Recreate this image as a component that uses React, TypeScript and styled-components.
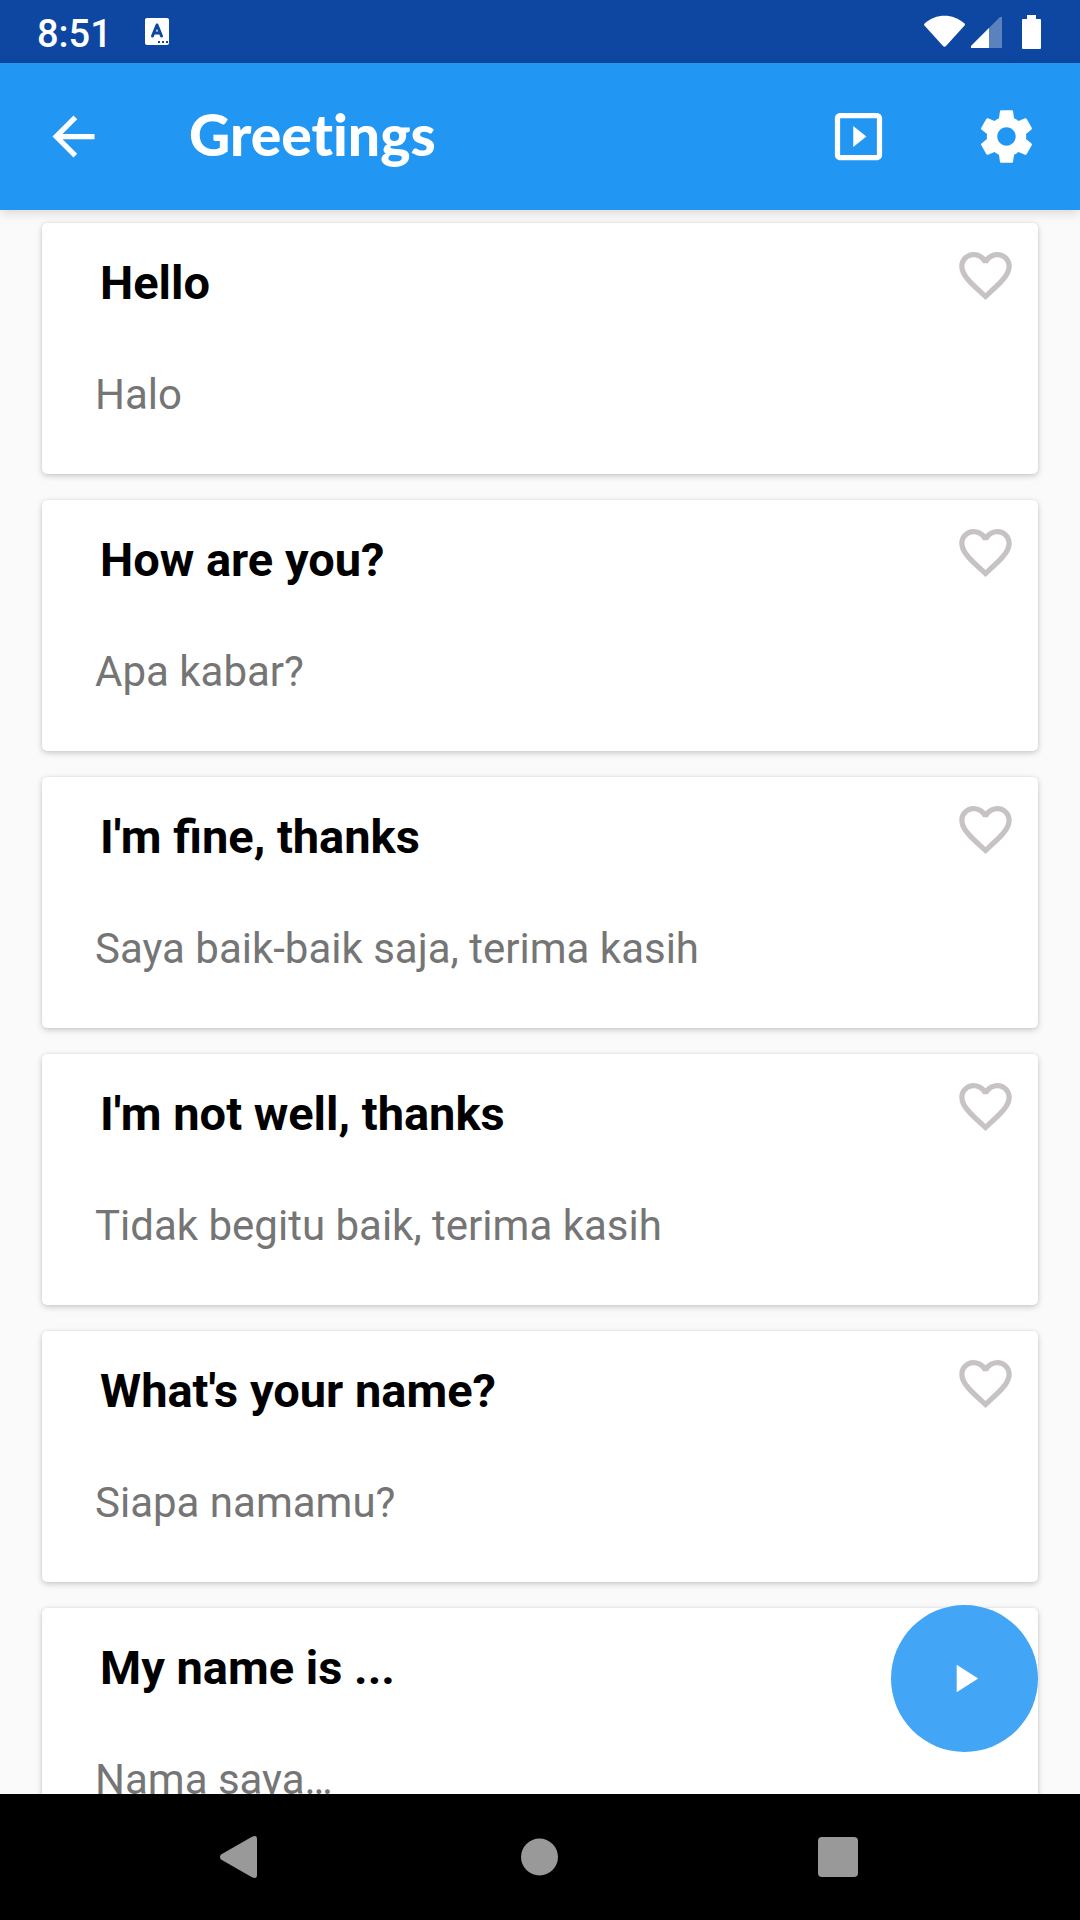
import React, { useState } from "react";
import styled, { createGlobalStyle } from "styled-components";

const GlobalStyle = createGlobalStyle`
  *, *::before, *::after { box-sizing: border-box; }
  body { margin: 0; background: #fafafa; font-family: Roboto, "Noto Sans", sans-serif; }
  h1, h2, p, ul { margin: 0; padding: 0; }
`;

const Screen = styled.div`
  position: relative;
  display: flex;
  flex-direction: column;
  height: 100vh;
  overflow: hidden;
  background: #fafafa;
`;

const StatusBar = styled.div`
  display: flex;
  align-items: center;
  flex: none;
  height: 63px;
  padding: 0 38px 0 37px;
  background: #0d47a1;
  color: #fff;
`;

const Clock = styled.time`
  font-size: 38px;
  font-weight: 500;
  line-height: 44px;
  padding-top: 4px;
`;

const NoticeIcon = styled.svg`
  width: 24px;
  height: 28px;
  margin-left: 33px;
`;

const SystemIcons = styled.svg`
  width: 118px;
  height: 36px;
  margin-left: auto;
`;

const Toolbar = styled.header`
  position: relative;
  z-index: 1;
  display: flex;
  align-items: center;
  flex: none;
  height: 147px;
  padding: 0 42px;
  background: #2196f3;
  color: #fff;
  box-shadow: 0 3px 10px rgba(0, 0, 0, 0.14);
`;

const Title = styled.h1`
  flex: 1;
  padding: 0 0 5px 84px;
  font-family: Lato, sans-serif;
  font-size: 57px;
  font-weight: 900;
  font-variant-ligatures: none;
  line-height: 64px;
`;

const Actions = styled.div`
  display: flex;
  gap: 85px;
`;

const IconButton = styled.button<{ $color?: string }>`
  display: flex;
  flex: none;
  padding: 0;
  border: 0;
  background: none;
  color: ${(p) => p.$color ?? "#fff"};
  cursor: pointer;
`;

const Glyph = styled.svg<{ $size: number }>`
  display: block;
  width: ${(p) => p.$size}px;
  height: ${(p) => p.$size}px;
  fill: currentColor;
`;

const PhraseList = styled.ul`
  display: flex;
  flex: 1;
  flex-direction: column;
  gap: 26px;
  min-height: 0;
  padding: 13px 42px 26px;
  overflow-y: auto;
  scrollbar-width: none;
  list-style: none;
`;

const Card = styled.li`
  display: flex;
  flex: none;
  align-items: flex-start;
  justify-content: space-between;
  padding: 21px 21px 54px 53px;
  border-radius: 5px;
  background: #fff;
  box-shadow: 0 2px 6px rgba(0, 0, 0, 0.2), 0 0 2px rgba(0, 0, 0, 0.08);
`;

const Phrase = styled.div`
  display: flex;
  flex-direction: column;
  gap: 59px;
  padding-top: 11px;
`;

const Source = styled.h2`
  padding-left: 5px;
  color: #000;
  font-size: 47px;
  font-weight: 700;
  line-height: 56px;
`;

const Translation = styled.p`
  color: #757575;
  font-size: 42px;
  line-height: 50px;
`;

const PlayAll = styled.button`
  position: absolute;
  right: 42px;
  bottom: 168px;
  z-index: 2;
  display: flex;
  align-items: center;
  justify-content: center;
  width: 147px;
  height: 147px;
  padding: 0;
  border: 0;
  border-radius: 50%;
  background: #42a5f5;
  color: #fff;
  cursor: pointer;
`;

const NavBar = styled.nav`
  display: flex;
  align-items: center;
  justify-content: center;
  gap: 236px;
  flex: none;
  height: 126px;
  background: #000;
`;

const paths = {
  back: "M20 11H7.83l5.59-5.59L12 4l-8 8 8 8 1.41-1.41L7.83 13H20v-2z",
  slideshow:
    "M10 8v8l5-4-5-4zm9-5H5c-1.1 0-2 .9-2 2v14c0 1.1.9 2 2 2h14c1.1 0 2-.9 2-2V5c0-1.1-.9-2-2-2zm0 16H5V5h14v14z",
  settings:
    "M19.43 12.98c.04-.32.07-.64.07-.98s-.03-.66-.07-.98l2.11-1.65c.19-.15.24-.42.12-.64l-2-3.46c-.12-.22-.39-.3-.61-.22l-2.49 1c-.52-.4-1.08-.73-1.69-.98l-.38-2.65C14.46 2.18 14.25 2 14 2h-4c-.25 0-.46.18-.49.42l-.38 2.65c-.61.25-1.17.59-1.69.98l-2.49-1c-.23-.09-.49 0-.61.22l-2 3.46c-.13.22-.07.49.12.64l2.11 1.65c-.04.32-.07.65-.07.98s.03.66.07.98l-2.11 1.65c-.19.15-.24.42-.12.64l2 3.46c.12.22.39.3.61.22l2.49-1c.52.4 1.08.73 1.69.98l.38 2.65c.03.24.24.42.49.42h4c.25 0 .46-.18.49-.42l.38-2.65c.61-.25 1.17-.59 1.69-.98l2.49 1c.23.09.49 0 .61-.22l2-3.46c.12-.22.07-.49-.12-.64l-2.11-1.65zM12 15.5c-1.93 0-3.5-1.57-3.5-3.5s1.57-3.5 3.5-3.5 3.5 1.57 3.5 3.5-1.57 3.5-3.5 3.5z",
  heart:
    "M16.5 3c-1.74 0-3.41.81-4.5 2.09C10.91 3.81 9.24 3 7.5 3 4.42 3 2 5.42 2 8.5c0 3.78 3.4 6.86 8.55 11.54L12 21.35l1.45-1.32C18.6 15.36 22 12.28 22 8.5 22 5.42 19.58 3 16.5 3zm-4.4 15.55l-.1.1-.1-.1C7.14 14.24 4 11.39 4 8.5 4 6.5 5.5 5 7.5 5c1.54 0 3.04.99 3.57 2.36h1.87C13.46 5.99 14.96 5 16.5 5c2 0 3.5 1.5 3.5 3.5 0 2.89-3.14 5.74-7.9 10.05z",
  heartFull:
    "M12 21.35l-1.45-1.32C5.4 15.36 2 12.28 2 8.5 2 5.42 4.42 3 7.5 3c1.74 0 3.41.81 4.5 2.09C13.09 3.81 14.76 3 16.5 3 19.58 3 22 5.42 22 8.5c0 3.78-3.4 6.86-8.55 11.54L12 21.35z",
  play: "M8 5v14l11-7z",
};

function Icon({ name, size = 63 }: { name: keyof typeof paths; size?: number }) {
  return (
    <Glyph $size={size} viewBox="0 0 24 24" aria-hidden="true">
      <path d={paths[name]} />
    </Glyph>
  );
}

const phrases = [
  { source: "Hello", translation: "Halo" },
  { source: "How are you?", translation: "Apa kabar?" },
  { source: "I'm fine, thanks", translation: "Saya baik-baik saja, terima kasih" },
  { source: "I'm not well, thanks", translation: "Tidak begitu baik, terima kasih" },
  { source: "What's your name?", translation: "Siapa namamu?" },
  { source: "My name is ...", translation: "Nama saya…" },
];

function PhraseCard({ source, translation }: { source: string; translation: string }) {
  const [saved, setSaved] = useState(false);
  return (
    <Card>
      <Phrase>
        <Source>{source}</Source>
        <Translation lang="id">{translation}</Translation>
      </Phrase>
      <IconButton
        type="button"
        $color="#c7c3c4"
        aria-label={`Favourite ${source}`}
        aria-pressed={saved}
        onClick={() => setSaved(!saved)}
      >
        <Icon name={saved ? "heartFull" : "heart"} />
      </IconButton>
    </Card>
  );
}

export default function App() {
  return (
    <Screen>
      <GlobalStyle />
      <StatusBar>
        <Clock>8:51</Clock>
        <NoticeIcon viewBox="0 0 24 28" aria-hidden="true">
          <rect width="24" height="27" rx="2" fill="#fff" />
          <path d="M7.500 18 L12 7 L16.500 18 M9 15 H15" fill="none" stroke="#0d47a1" strokeWidth="3" strokeLinecap="round" strokeLinejoin="round" />
          <path d="M13 23h2v2h-2zM17 23h2v2h-2zM21 23h2v2h-2z" fill="#0d47a1" />
        </NoticeIcon>
        <SystemIcons viewBox="924 13 118 36" fill="#fff" aria-hidden="true">
          <path d="M924.500 22.500 C936 12 953 12 964.500 22.500 L965 24 L946 45 Q944.500 46.500 943 45 L924 24 Z" />
          <path d="M1002 16 V47 H971 V45 L1000 16 Z" opacity="0.32" />
          <path d="M989 27 V47 H971 V45 Z" />
          <path d="M1027 14h9v4h4q1 0 1 1v28q0 1-1 1h-17q-1 0-1-1V19q0-1 1-1h4z" />
        </SystemIcons>
      </StatusBar>
      <Toolbar>
        <IconButton type="button" aria-label="Back">
          <Icon name="back" />
        </IconButton>
        <Title>Greetings</Title>
        <Actions>
          <IconButton type="button" aria-label="Slideshow">
            <Icon name="slideshow" />
          </IconButton>
          <IconButton type="button" aria-label="Settings">
            <Icon name="settings" />
          </IconButton>
        </Actions>
      </Toolbar>
      <PhraseList>
        {phrases.map((p) => (
          <PhraseCard key={p.source} {...p} />
        ))}
      </PhraseList>
      <PlayAll type="button" aria-label="Play all">
        <Icon name="play" size={47} />
      </PlayAll>
      <NavBar aria-label="System">
        <IconButton type="button" $color="#999" aria-label="System back">
          <Glyph $size={63} viewBox="0 0 63 63">
            <path d="M11 28.500 L42 10.800 Q47 8.500 47 13 V49 Q47 53.500 42 51.200 L11 33.500 Q9 31 11 28.500 Z" />
          </Glyph>
        </IconButton>
        <IconButton type="button" $color="#999" aria-label="Home">
          <Glyph $size={63} viewBox="0 0 63 63">
            <circle cx="30.500" cy="31" r="18.500" />
          </Glyph>
        </IconButton>
        <IconButton type="button" $color="#999" aria-label="Recent apps">
          <Glyph $size={63} viewBox="0 0 63 63">
            <rect x="10" y="11" width="40" height="40" rx="4" />
          </Glyph>
        </IconButton>
      </NavBar>
    </Screen>
  );
}
